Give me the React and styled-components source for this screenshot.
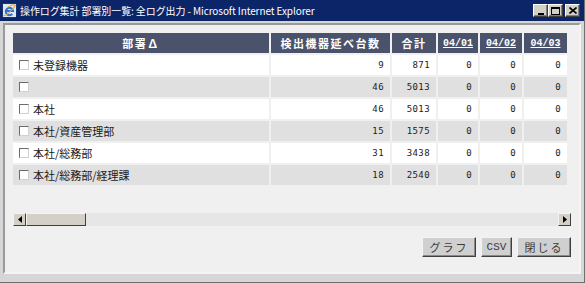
import React from "react";
import styled, { createGlobalStyle } from "styled-components";

const Global = createGlobalStyle`
  html, body { margin: 0; padding: 0; background: #d4d0c8; }
  body { width: 585px; height: 283px; overflow: hidden; font-family: "Noto Sans CJK JP", sans-serif; }
`;

const Window = styled.div`
  width: 585px;
  height: 283px;
  box-sizing: border-box;
  background: #d6d6d6;
  border-right: 1px solid #6f6f6f;
  border-bottom: 1px solid #6f6f6f;
  padding: 0 3px 8px 3px;
  display: flex;
  flex-direction: column;
`;

const TitleBar = styled.div`
  height: 21px;
  margin: 0 -3px;
  background: #0c2468;
  display: flex;
  align-items: center;
  padding: 0 4px 0 2px;
  gap: 3px;
  flex: none;
`;

const Title = styled.span`
  color: #ffffff;
  font-family: "Noto Sans CJK JP", sans-serif;
  font-size: 10px;
  white-space: nowrap;
  flex: 1;
  letter-spacing: -0.1px;
`;

const Controls = styled.div`
  display: flex;
  align-items: center;
`;

const CtrlButton = styled.div`
  width: 15px;
  height: 13px;
  box-sizing: border-box;
  background: #d4d0c8;
  border: 1px solid;
  border-color: #ffffff #404040 #404040 #ffffff;
  box-shadow: inset -1px -1px 0 #808080;
  display: flex;
  align-items: center;
  justify-content: center;
  margin-left: ${(p) => (p.$gap ? "2px" : "0")};
`;

const Client = styled.div`
  flex: 1;
  margin-top: 2px;
  box-sizing: border-box;
  border: 2px solid;
  border-color: #9a9a9a #f4f4f4 #f4f4f4 #9a9a9a;
  background: #f0f0f0;
  display: flex;
  flex-direction: column;
  padding: 6px 6px 0 6px;
`;

const ScrollArea = styled.div`
  height: 195px;
  display: flex;
  flex-direction: column;
  justify-content: space-between;
`;

const Table = styled.table`
  border-collapse: separate;
  border-spacing: 2px;
  table-layout: fixed;
  width: 558px;
`;

const HeadCell = styled.th`
  height: 20px;
  padding: 0;
  background: #4a536b;
  color: #ffffff;
  font-family: ${(p) => (p.$mono ? '"Liberation Mono", monospace' : '"Noto Sans CJK JP", sans-serif')};
  font-size: ${(p) => (p.$mono ? "10px" : "11px")};
  font-weight: bold;
  letter-spacing: ${(p) => (p.$mono ? "0" : "1.5px")};
  text-decoration: ${(p) => (p.$link ? "underline" : "none")};
  text-align: center;
  white-space: nowrap;
`;

const Row = styled.tr`
  background: ${(p) => (p.$alt ? "#e0e0e0" : "#ffffff")};
`;

const NameCell = styled.td`
  height: 20px;
  padding: 0 0 0 6px;
  font-size: 11px;
  color: #1a1a1a;
  white-space: nowrap;
`;

const NameInner = styled.div`
  display: flex;
  align-items: center;
  gap: 4px;
`;

const CheckBox = styled.span`
  width: 10px;
  height: 10px;
  box-sizing: border-box;
  border: 1px solid;
  border-color: #6c6c6c #d0d0d0 #d0d0d0 #6c6c6c;
  background: #ffffff;
  flex: none;
`;

const NumCell = styled.td`
  height: 20px;
  padding: 0 6px 0 0;
  text-align: right;
  font-family: "DejaVu Sans Mono", monospace;
  font-size: 9px;
  letter-spacing: 0.4px;
  color: #222222;
`;

const HScroll = styled.div`
  height: 13px;
  margin: 0 2px;
  background: #e6e6e6;
  display: flex;
  align-items: stretch;
`;

const ScrollBtn = styled.div`
  width: 13px;
  box-sizing: border-box;
  background: #d4d0c8;
  border: 1px solid;
  border-color: #f4f4f4 #404040 #404040 #f4f4f4;
  display: flex;
  align-items: center;
  justify-content: center;
  flex: none;
`;

const Thumb = styled.div`
  width: 60px;
  box-sizing: border-box;
  background: #d4d0c8;
  border: 1px solid;
  border-color: #f4f4f4 #404040 #404040 #f4f4f4;
  flex: none;
`;

const Track = styled.div`
  flex: 1;
`;

const ButtonBar = styled.div`
  display: flex;
  justify-content: flex-end;
  gap: 5px;
  margin-top: 11px;
  padding-right: 2px;
`;

const Button = styled.button`
  height: 20px;
  width: ${(p) => p.$w}px;
  box-sizing: border-box;
  padding: 0;
  background: #d0d0d0;
  border: 1px solid;
  border-color: #f4f4f4 #404040 #404040 #f4f4f4;
  box-shadow: inset -1px -1px 0 #8a8a8a;
  font-family: ${(p) => (p.$mono ? '"Liberation Mono", monospace' : '"Noto Sans CJK JP", sans-serif')};
  font-size: 11px;
  letter-spacing: ${(p) => (p.$mono ? "0" : "2px")};
  color: #3a3a3a;
`;

const IEIcon = () => (
  <svg width="15" height="15" viewBox="0 0 16 16">
    <rect x="1" y="1" width="14" height="14" fill="#dfe8f5" />
    <path d="M4.2 8.6H11.8A3.9 3.9 0 1 0 10.9 11.6" fill="none" stroke="#2f6fd0" strokeWidth="2.2" />
    <path d="M1.5 13.5C4 14 11 8 14.5 2.5C13 1 9 2.5 6.5 4.5" fill="none" stroke="#e4a93a" strokeWidth="1.1" />
  </svg>
);

const columns = [256, 119, 44, 40, 42, 43];

const rows = [
  { name: "未登録機器", a: 9, b: 871 },
  { name: "", a: 46, b: 5013 },
  { name: "本社", a: 46, b: 5013 },
  { name: "本社/資産管理部", a: 15, b: 1575 },
  { name: "本社/総務部", a: 31, b: 3438 },
  { name: "本社/総務部/経理課", a: 18, b: 2540 },
];

export default function App() {
  return (
    <>
      <Global />
      <Window>
        <TitleBar>
          <IEIcon />
          <Title>操作ログ集計 部署別一覧: 全ログ出力 - Microsoft Internet Explorer</Title>
          <Controls>
            <CtrlButton>
              <svg width="8" height="8" viewBox="0 0 8 8"><rect x="1" y="6" width="6" height="2" fill="#000" /></svg>
            </CtrlButton>
            <CtrlButton>
              <svg width="9" height="8" viewBox="0 0 9 8"><rect x="0.5" y="0.5" width="8" height="7" fill="none" stroke="#000" /><rect x="0" y="0" width="9" height="2" fill="#000" /></svg>
            </CtrlButton>
            <CtrlButton $gap>
              <svg width="8" height="7" viewBox="0 0 8 7"><path d="M0.5 0.5L7.5 6.5M7.5 0.5L0.5 6.5" stroke="#000" strokeWidth="1.6" /></svg>
            </CtrlButton>
          </Controls>
        </TitleBar>
        <Client>
          <ScrollArea>
            <Table>
              <colgroup>
                {columns.map((w, i) => (
                  <col key={i} style={{ width: w }} />
                ))}
              </colgroup>
              <thead>
                <tr>
                  <HeadCell>部署∆</HeadCell>
                  <HeadCell>検出機器延べ台数</HeadCell>
                  <HeadCell>合計</HeadCell>
                  <HeadCell $mono $link>04/01</HeadCell>
                  <HeadCell $mono $link>04/02</HeadCell>
                  <HeadCell $mono $link>04/03</HeadCell>
                </tr>
              </thead>
              <tbody>
                {rows.map((r, i) => (
                  <Row key={i} $alt={i % 2 === 1}>
                    <NameCell>
                      <NameInner>
                        <CheckBox />
                        {r.name}
                      </NameInner>
                    </NameCell>
                    <NumCell>{r.a}</NumCell>
                    <NumCell>{r.b}</NumCell>
                    <NumCell>0</NumCell>
                    <NumCell>0</NumCell>
                    <NumCell>0</NumCell>
                  </Row>
                ))}
              </tbody>
            </Table>
            <HScroll>
              <ScrollBtn>
                <svg width="4" height="7" viewBox="0 0 4 7"><path d="M4 0L0 3.5L4 7z" fill="#000" /></svg>
              </ScrollBtn>
              <Thumb />
              <Track />
              <ScrollBtn>
                <svg width="4" height="7" viewBox="0 0 4 7"><path d="M0 0L4 3.5L0 7z" fill="#000" /></svg>
              </ScrollBtn>
            </HScroll>
          </ScrollArea>
          <ButtonBar>
            <Button $w={54}>グラフ</Button>
            <Button $w={31} $mono>CSV</Button>
            <Button $w={54}>閉じる</Button>
          </ButtonBar>
        </Client>
      </Window>
    </>
  );
}
